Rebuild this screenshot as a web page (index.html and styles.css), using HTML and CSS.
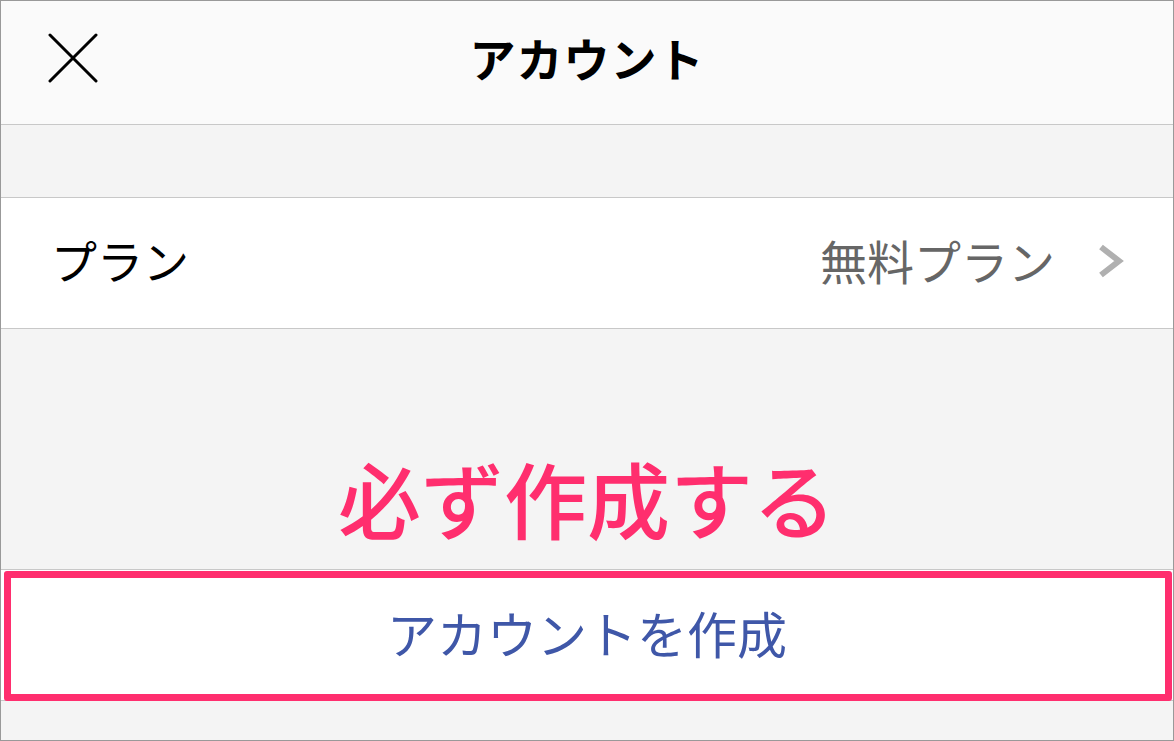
FILE: index.html
```
<!DOCTYPE html>
<html lang="ja">
<head>
    <meta charset="UTF-8">
    <title>アカウント</title>
    <link rel="stylesheet" href="styles.css">
</head>
<body>

<div class="screen">
    <header class="nav-bar">
        <button class="close-btn" aria-label="閉じる">
            <svg width="50" height="50" viewBox="0 0 50 50">
                <path d="M2 2 L48 48 M48 2 L2 48" stroke="#000" stroke-width="3" stroke-linecap="round" fill="none"/>
            </svg>
        </button>
        <h1 class="nav-title">アカウント</h1>
    </header>

    <div class="spacer"></div>

    <div class="row">
        <span class="row-label">プラン</span>
        <span class="row-value">無料プラン</span>
        <svg class="chevron" width="28" height="36" viewBox="0 0 28 36">
            <path d="M4 4 L22 18 L4 32" stroke="#b0b0b0" stroke-width="6" fill="none"/>
        </svg>
    </div>

    <div class="note-area">
        <p class="note">必ず作成する</p>
    </div>

    <div class="row action-row">
        <span class="action-text">アカウントを作成</span>
        <span class="highlight"></span>
    </div>

    <div class="bottom-area"></div>
</div>

</body>
</html>
```

FILE: styles.css
```
body { margin: 0; font-family: "Noto Sans CJK JP", "Noto Sans", sans-serif; }
.screen { width: 1174px; height: 741px; box-sizing: border-box; border: 1px solid #999; background-color: #f4f4f4; display: flex; flex-direction: column; overflow: hidden; }

.nav-bar { height: 123px; background-color: #fafafa; border-bottom: 1px solid #c8c8c8; display: flex; align-items: center; justify-content: center; position: relative; flex-shrink: 0; }
.close-btn { position: absolute; left: 47px; top: 32px; padding: 0; border: none; background: none; width: 50px; height: 50px; }
.nav-title { margin: 0 0 12px 0; font-size: 46px; font-weight: 700; color: #000; letter-spacing: 1px; }

.spacer { height: 72px; border-bottom: 1px solid #c8c8c8; flex-shrink: 0; }

.row { height: 130px; background-color: #fff; border-bottom: 1px solid #c8c8c8; display: flex; align-items: center; padding: 0 48px 0 50px; flex-shrink: 0; }
.row-label { font-size: 46px; color: #000; flex: 1; margin-bottom: 8px; }
.row-value { font-size: 47px; color: #666; margin-right: 42px; margin-bottom: 8px; }
.chevron { display: block; margin-bottom: 4px; }

.note-area { height: 240px; border-bottom: 1px solid #c8c8c8; display: flex; align-items: flex-end; justify-content: center; flex-shrink: 0; }
.note { margin: 0 0 30px 0; font-size: 83px; line-height: 1; font-weight: 500; color: #ff2e6e; }

.action-row { justify-content: center; position: relative; padding: 0; }
.action-text { font-size: 50px; color: #3f57a8; margin-bottom: 6px; }
.highlight { position: absolute; left: 3px; right: 1px; top: 1px; bottom: -1px; border: 7px solid #ff2e6e; border-radius: 3px; }

.bottom-area { flex: 1; }
```
